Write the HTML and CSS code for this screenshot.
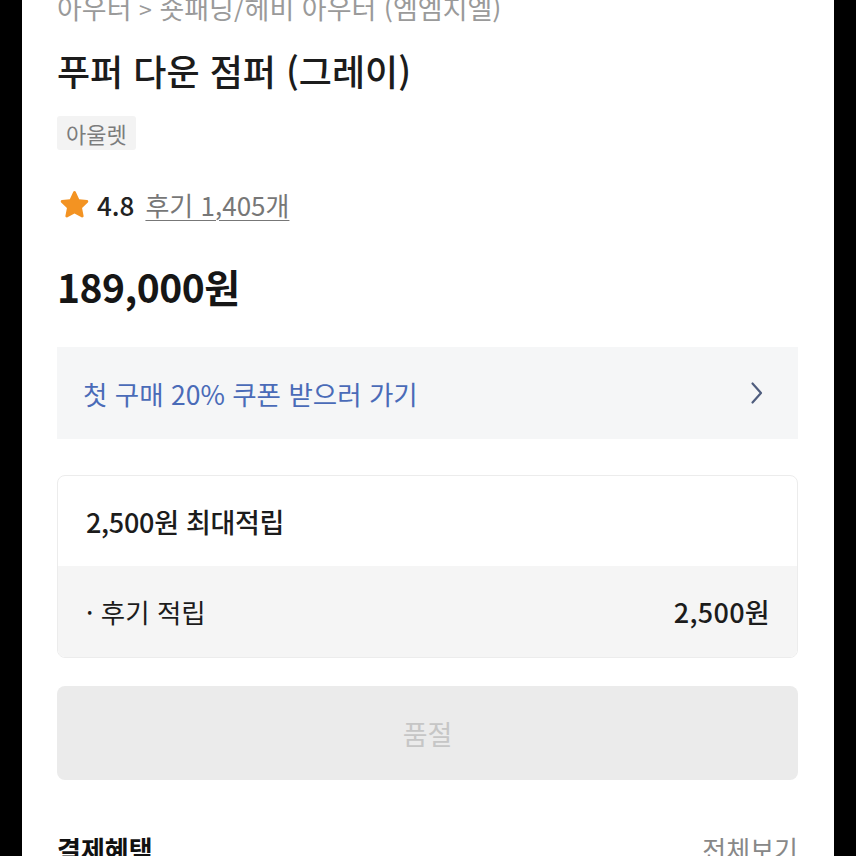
FILE: index.html
```html
<!DOCTYPE html>
<html lang="ko">
<head>
<meta charset="utf-8">
<link rel="stylesheet" href="styles.css">
</head>
<body>
<div class="screen">
  <div class="page">
    <div class="breadcrumb">아우터 <span class="sep">&gt;</span> 숏패딩/헤비 아우터 (엠엠지엘)</div>
    <h1 class="title">푸퍼 다운 점퍼 (그레이)</h1>
    <div class="tags"><span class="tag">아울렛</span></div>
    <div class="rating">
      <svg class="star" viewBox="0 0 24 24" width="33" height="33"><path d="M12 2.2c.4 0 .7.2.9.6l2.5 5.3 5.7.7c.9.1 1.2 1.1.6 1.7l-4.2 4 1.1 5.7c.2.9-.8 1.5-1.5 1.1L12 18.5l-5.1 2.8c-.8.4-1.7-.2-1.5-1.1l1.1-5.7-4.2-4c-.6-.6-.3-1.6.6-1.7l5.7-.7 2.5-5.3c.2-.4.5-.6.9-.6z" fill="#f39322"/></svg>
      <span class="score">4.8</span>
      <span class="reviews">후기 1,405개</span>
    </div>
    <div class="price">189,000원</div>
    <div class="coupon">
      <span class="coupon-text">첫 구매 20% 쿠폰 받으러 가기</span>
      <svg class="chev" viewBox="0 0 14 24" width="14" height="24"><path d="M2.5 2.5 11 12l-8.5 9.5" fill="none" stroke="#4f5d7e" stroke-width="2.2" stroke-linecap="round" stroke-linejoin="round"/></svg>
    </div>
    <div class="points">
      <div class="points-head">2,500원 최대적립</div>
      <div class="points-row"><span>· 후기 적립</span><span class="amount">2,500원</span></div>
    </div>
    <div class="soldout">품절</div>
    <div class="section-head">
      <span class="section-title">결제혜택</span>
      <span class="section-more">전체보기</span>
    </div>
  </div>
</div>
</body>
</html>
```

FILE: styles.css
```css
* { box-sizing: border-box; }
html, body { margin: 0; padding: 0; background: #000; }
body {
  font-family: "Noto Sans CJK KR", "Noto Sans", sans-serif;
  color: #1a1a1a;
}
.screen {
  width: 856px;
  height: 856px;
  overflow: hidden;
  background: #000;
  padding: 0 22px;
}
.page {
  background: #fff;
  height: 856px;
  padding: 0 36px 0 35px;
  display: flex;
  flex-direction: column;
}
.page > * { flex-shrink: 0; }
.breadcrumb {
  margin-top: -13px;
  height: 42px;
  line-height: 42px;
  font-size: 27px;
  color: #9a9a9a;
  white-space: nowrap;
}
.breadcrumb .sep { font-size: 23px; }
.title {
  margin: 18px 0 0;
  font-size: 36px;
  line-height: 46px;
  font-weight: 500;
  color: #1c1c1c;
}
.tags { margin-top: 23px; display: flex; }
.tag {
  display: inline-block;
  background: #f3f3f3;
  color: #7c7c7c;
  font-size: 22px;
  line-height: 34px;
  padding: 0 9px;
  border-radius: 3px;
}
.rating {
  margin-top: 36px;
  height: 36px;
  display: flex;
  align-items: center;
}
.star { margin-left: 1px; margin-right: 6px; }
.score {
  font-size: 26px;
  font-weight: 500;
  color: #222;
  margin-right: 11px;
}
.reviews {
  font-size: 26px;
  color: #777;
  text-decoration: underline;
  text-decoration-thickness: 1px;
  text-underline-offset: 4px;
}
.price {
  margin-top: 39px;
  font-size: 39px;
  line-height: 50px;
  font-weight: 700;
  color: #161616;
  letter-spacing: -0.5px;
}
.coupon {
  margin-top: 36px;
  height: 92px;
  background: #f5f6f7;
  display: flex;
  align-items: center;
  justify-content: space-between;
  padding: 0 34px 0 26px;
}
.coupon-text {
  font-size: 26.5px;
  color: #4a6bb8;
}
.points {
  margin-top: 36px;
  border: 1px solid #ececec;
  border-radius: 8px;
  overflow: hidden;
}
.points-head {
  height: 90px;
  display: flex;
  align-items: center;
  padding-left: 28px;
  font-size: 27px;
  font-weight: 500;
  color: #1c1c1c;
  letter-spacing: -0.3px;
}
.points-row {
  height: 91px;
  background: #f5f5f5;
  display: flex;
  align-items: center;
  justify-content: space-between;
  padding: 0 27px 0 28px;
  font-size: 26.5px;
  color: #1c1c1c;
}
.points-row .amount { font-weight: 500; font-size: 27px; letter-spacing: 0.3px; }
.soldout {
  margin-top: 28px;
  height: 94px;
  background: #ebebeb;
  border-radius: 8px;
  display: flex;
  align-items: center;
  justify-content: center;
  font-size: 27px;
  color: #c6c6c6;
}
.section-head {
  margin-top: 51px;
  line-height: 36px;
  display: flex;
  justify-content: space-between;
  align-items: baseline;
}
.section-title {
  font-size: 26px;
  font-weight: 700;
  color: #111;
}
.section-more {
  font-size: 26px;
  color: #888;
}
```
